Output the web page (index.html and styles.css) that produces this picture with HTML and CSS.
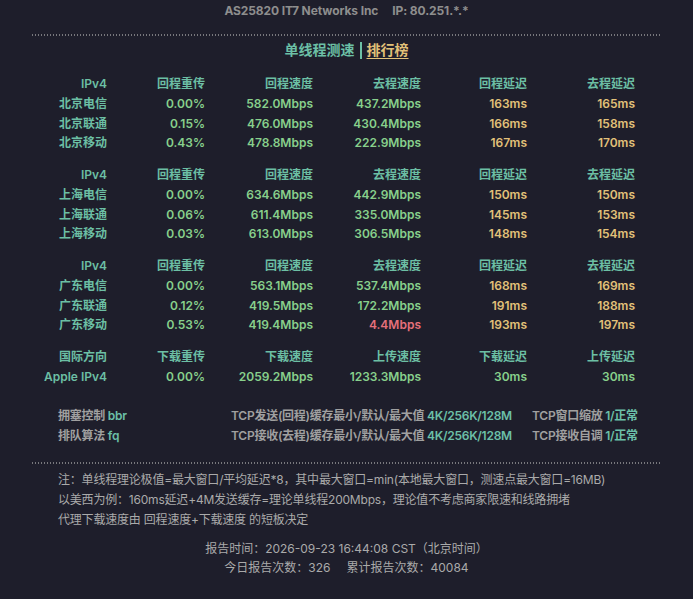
FILE: index.html
```html
<!DOCTYPE html>
<html lang="zh-CN">
<head>
<meta charset="utf-8">
<title>单线程测速</title>
<link rel="stylesheet" href="styles.css">
</head>
<body>
<div class="top">AS25820 IT7 Networks Inc<span class="sep"></span>IP: 80.251.*.*</div>
<div class="wrap">
  <div class="dots"></div>
  <div class="title"><span class="cur">单线程测速</span><span class="bar"></span><span class="link">排行榜</span></div>

  <div class="grid group first">
    <div class="h">IPv4</div><div class="h">回程重传</div><div class="h">回程速度</div><div class="h">去程速度</div><div class="h">回程延迟</div><div class="h">去程延迟</div>
    <div class="h">北京电信</div><div class="g">0.00%</div><div class="g">582.0Mbps</div><div class="g">437.2Mbps</div><div class="y">163ms</div><div class="y">165ms</div>
    <div class="h">北京联通</div><div class="g">0.15%</div><div class="g">476.0Mbps</div><div class="g">430.4Mbps</div><div class="y">166ms</div><div class="y">158ms</div>
    <div class="h">北京移动</div><div class="g">0.43%</div><div class="g">478.8Mbps</div><div class="g">222.9Mbps</div><div class="y">167ms</div><div class="y">170ms</div>
  </div>

  <div class="grid group">
    <div class="h">IPv4</div><div class="h">回程重传</div><div class="h">回程速度</div><div class="h">去程速度</div><div class="h">回程延迟</div><div class="h">去程延迟</div>
    <div class="h">上海电信</div><div class="g">0.00%</div><div class="g">634.6Mbps</div><div class="g">442.9Mbps</div><div class="y">150ms</div><div class="y">150ms</div>
    <div class="h">上海联通</div><div class="g">0.06%</div><div class="g">611.4Mbps</div><div class="g">335.0Mbps</div><div class="y">145ms</div><div class="y">153ms</div>
    <div class="h">上海移动</div><div class="g">0.03%</div><div class="g">613.0Mbps</div><div class="g">306.5Mbps</div><div class="y">148ms</div><div class="y">154ms</div>
  </div>

  <div class="grid group">
    <div class="h">IPv4</div><div class="h">回程重传</div><div class="h">回程速度</div><div class="h">去程速度</div><div class="h">回程延迟</div><div class="h">去程延迟</div>
    <div class="h">广东电信</div><div class="g">0.00%</div><div class="g">563.1Mbps</div><div class="g">537.4Mbps</div><div class="y">168ms</div><div class="y">169ms</div>
    <div class="h">广东联通</div><div class="g">0.12%</div><div class="g">419.5Mbps</div><div class="g">172.2Mbps</div><div class="y">191ms</div><div class="y">188ms</div>
    <div class="h">广东移动</div><div class="g">0.53%</div><div class="g">419.4Mbps</div><div class="r">4.4Mbps</div><div class="y">193ms</div><div class="y">197ms</div>
  </div>

  <div class="grid">
    <div class="h">国际方向</div><div class="h">下载重传</div><div class="h">下载速度</div><div class="h">上传速度</div><div class="h">下载延迟</div><div class="h">上传延迟</div>
    <div class="h">Apple IPv4</div><div class="g">0.00%</div><div class="g">2059.2Mbps</div><div class="g">1233.3Mbps</div><div class="g">30ms</div><div class="g">30ms</div>
  </div>

  <div class="sys">
    <div>拥塞控制 <span class="v">bbr</span></div>
    <div>TCP发送(回程)缓存最小/默认/最大值 <span class="v">4K/256K/128M</span></div>
    <div>TCP窗口缩放 <span class="v">1/正常</span></div>
    <div>排队算法 <span class="v">fq</span></div>
    <div>TCP接收(去程)缓存最小/默认/最大值 <span class="v">4K/256K/128M</span></div>
    <div>TCP接收自调 <span class="v">1/正常</span></div>
  </div>

  <div class="dots dots2"></div>

  <div class="notes">
    <div>注：单线程理论极值=最大窗口/平均延迟*8，其中最大窗口=min(本地最大窗口，测速点最大窗口=16MB)</div>
    <div>以美西为例：160ms延迟+4M发送缓存=理论单线程200Mbps，理论值不考虑商家限速和线路拥堵</div>
    <div>代理下载速度由 回程速度+下载速度 的短板决定</div>
  </div>

  <div class="report">
    <div>报告时间：2026-09-23 16:44:08 CST（北京时间）</div>
    <div>今日报告次数：326<span class="sep2"></span>累计报告次数：40084</div>
  </div>
</div>
</body>
</html>
```

FILE: styles.css
```css
html, body {
  margin: 0;
  padding: 0;
  background: #1e1e2b;
}
body {
  font-family: Inter, "Noto Sans CJK SC", sans-serif;
  color: #a8a8a8;
  font-size: 12px;
  line-height: 20px;
  padding-top: 1px;
}
.top {
  text-align: center;
  font-size: 12px;
  font-weight: 700;
  color: #8e8e8e;
  line-height: 20px;
  letter-spacing: -0.1px;
}
.sep { display: inline-block; width: 14px; }
.wrap {
  width: 631px;
  margin: 0 auto;
}
.dots {
  height: 2px;
  margin-top: 13px;
  background-image: radial-gradient(circle, #77777c 0.9px, transparent 1.1px);
  background-size: 3px 2px;
  background-repeat: repeat-x;
}
.title {
  margin-top: 4px;
  text-align: center;
  font-size: 14px;
  font-weight: 700;
  line-height: 20px;
  display: flex;
  justify-content: center;
  align-items: center;
}
.cur { color: #6cc0a6; }
.bar {
  display: inline-block;
  width: 2px;
  height: 17px;
  background: #6cc0a6;
  margin: 0 5px 0 5px;
}
.link {
  color: #e2c179;
  text-decoration: underline;
  text-underline-offset: 3px;
}
.grid {
  display: grid;
  grid-template-columns: 67px 98px 108px 108px 106px 108px;
  margin-left: 9px;
  font-weight: 600;
  line-height: 19.75px;
  text-align: right;
  white-space: nowrap;
}
.first { margin-top: 14px; }
.group { margin-bottom: 12px; }
.h { color: #6cbfa4; }
.g { color: #88d08c; }
.y { color: #e2c179; }
.r { color: #e6707a; }
.sys {
  display: grid;
  grid-template-columns: 173px 301px auto;
  padding-left: 27px;
  margin-top: 19px;
  font-weight: 600;
  color: #a0a0a0;
  white-space: nowrap;
  letter-spacing: -0.25px;
}
.v { color: #6cc0a8; }
.dots2 { margin-top: 16px; }
.notes {
  padding-left: 27px;
  margin-top: 6px;
  color: #aaaaaa;
  white-space: nowrap;
  letter-spacing: -0.2px;
}
.report {
  margin-top: 9px;
  text-align: center;
  color: #aaaaaa;
  line-height: 19px;
}
.sep2 { display: inline-block; width: 16px; }
```
